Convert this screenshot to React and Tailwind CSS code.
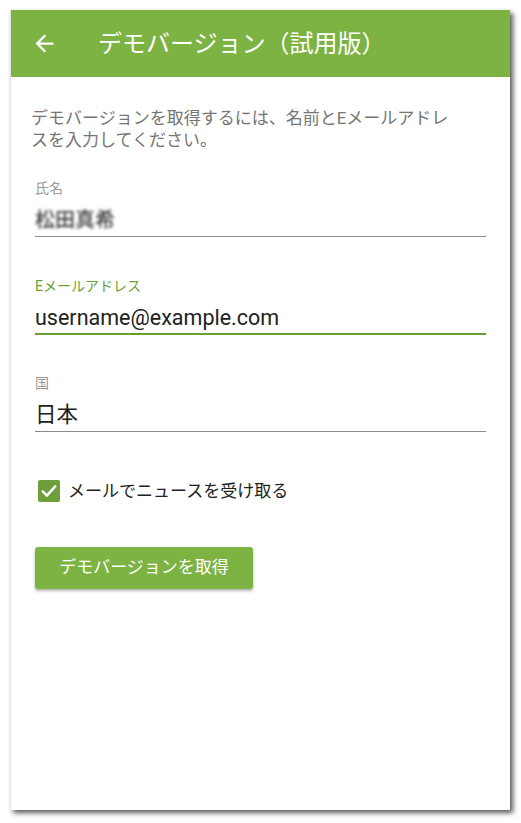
import React from 'react';

const jp = "font-['Roboto','Noto_Sans_CJK_JP',sans-serif]";

function Field({ label, value, active, blurred }) {
  return (
    <div className="mx-[24px]">
      <div className={`text-[14px] leading-[20px] ${active ? 'text-[#689f38]' : 'text-[#9a9a9a]'}`}>{label}</div>
      <div
        className={`mt-[7px] h-[32px] text-[21.5px] leading-[30px] ${
          active ? 'border-b-2 border-[#6aa033] text-[#212121]' : 'border-b border-[#8a8a8a] text-[#212121]'
        }`}
      >
        <span className={blurred ? 'text-[20px] font-medium text-[#3c3c3c] blur-[1.4px]' : ''}>{value}</span>
      </div>
    </div>
  );
}

export default function App() {
  return (
    <div className={`w-[521px] h-[823px] bg-white pt-[10px] pl-[10px] ${jp}`}>
      <div className="w-[500px] h-[800px] bg-white flex flex-col shadow-[3px_3px_5px_rgba(0,0,0,0.65)] border-l border-[#e4e4e4]">
        {/* toolbar */}
        <div className="h-[67px] bg-[#7cb342] flex items-center shrink-0">
          <svg className="ml-[20px] w-[27px] h-[27px]" viewBox="0 0 24 24" fill="#ffffff">
            <path d="M20 11H7.83l5.59-5.59L12 4l-8 8 8 8 1.41-1.41L7.83 13H20v-2z" />
          </svg>
          <div className="ml-[40px] text-white text-[24px] leading-none">デモバージョン（試用版）</div>
        </div>

        <div className="flex-1 flex flex-col">
          <p className="mt-[30px] ml-[20px] w-[426px] text-[17px] leading-[22px] text-[#757575]">
            デモバージョンを取得するには、名前とEメールアドレスを入力してください。
          </p>

          <div className="mt-[27px]">
            <Field label="氏名" value="松田真希" blurred />
          </div>
          <div className="mt-[39px]">
            <Field label="Eメールアドレス" value="username@example.com" active />
          </div>
          <div className="mt-[38px]">
            <Field label="国" value="日本" />
          </div>

          <label className="mt-[48px] ml-[27px] flex items-center gap-[8px]">
            <span className="w-[22px] h-[22px] rounded-[2px] bg-[#6e9f3a] flex items-center justify-center">
              <svg width="20" height="20" viewBox="0 0 24 24" fill="none" stroke="#ffffff" strokeWidth="3" strokeLinecap="round" strokeLinejoin="round">
                <path d="M4.5 12.5l5 5L19.5 6.5" />
              </svg>
            </span>
            <span className="text-[17px] leading-[22px] text-[#212121]">メールでニュースを受け取る</span>
          </label>

          <div className="mt-[45px] ml-[24px]">
            <button className="w-[218px] h-[42px] rounded-[3px] bg-[#7cb342] text-white text-[17px] shadow-[0_2px_3px_rgba(0,0,0,0.3)]">
              デモバージョンを取得
            </button>
          </div>
        </div>
      </div>
    </div>
  );
}
